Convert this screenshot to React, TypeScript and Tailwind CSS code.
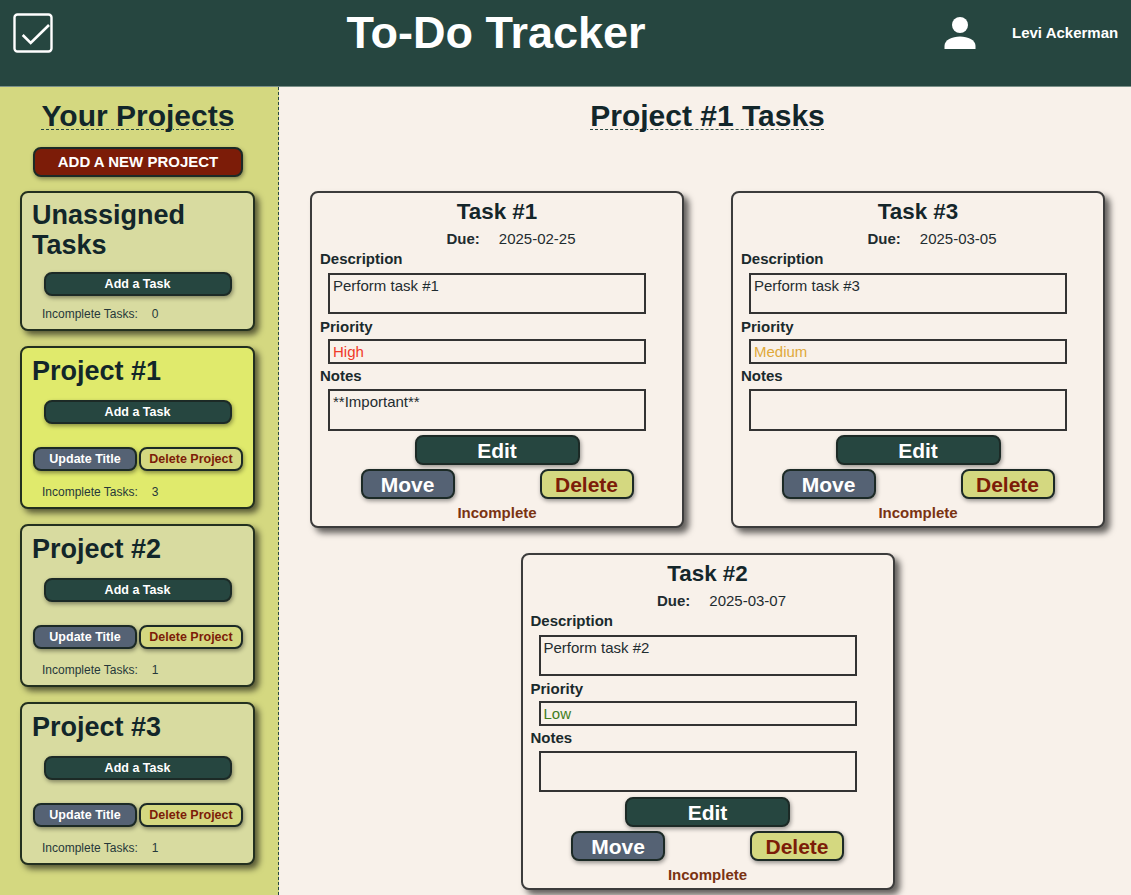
const font = "[font-family:'Liberation_Sans',Arial,sans-serif]";

interface Project {
  title: string;
  incomplete: number;
  active?: boolean;
  canEdit?: boolean;
}

interface Task {
  title: string;
  due: string;
  description: string;
  priority: string;
  priorityClass: string;
  notes: string;
  notesBox: string;
  rowGap: string;
}

const projects: Project[] = [
  { title: "Unassigned Tasks", incomplete: 0 },
  { title: "Project #1", incomplete: 3, active: true, canEdit: true },
  { title: "Project #2", incomplete: 1, canEdit: true },
  { title: "Project #3", incomplete: 1, canEdit: true },
];

const tasks: Task[] = [
  { title: "Task #1", due: "2025-02-25", description: "Perform task #1", priority: "High", priorityClass: "text-[#f03a2a]", notes: "**Important**", notesBox: "h-[42px] mt-[4px] mb-[4px] pt-[2px]", rowGap: "mb-[25px]" },
  { title: "Task #3", due: "2025-03-05", description: "Perform task #3", priority: "Medium", priorityClass: "text-[#e0a93a]", notes: "", notesBox: "h-[42px] mt-[4px] mb-[4px] pt-[2px]", rowGap: "mb-[25px]" },
  { title: "Task #2", due: "2025-03-07", description: "Perform task #2", priority: "Low", priorityClass: "text-[#3f7d1c]", notes: "", notesBox: "h-[41px] mt-[4px] mb-[5px] pt-[2px]", rowGap: "mb-0" },
];

function ProjectCard({ project }: { project: Project }) {
  return (
    <div
      className={`w-[235px] ml-[20px] mb-[15px] rounded-[8px] border-2 border-[#23301f] shadow-[4px_4px_6px_rgba(0,0,0,0.6)] ${
        project.active ? "bg-[#e0ea6c]" : "bg-[#d8dba0]"
      }`}
    >
      <h2 className={`pl-[10px] pr-2 text-[27px] leading-[30px] font-bold text-[#12262a] ${project.canEdit ? "pt-[8px]" : "pt-[7px]"}`}>{project.title}</h2>
      <div className={`flex justify-center ${project.canEdit ? "mt-[14px]" : "mt-[12px]"}`}>
        <button className="w-[188px] h-[24px] rounded-[8px] border-2 border-[#1c2a26] bg-[#264640] text-[12.5px] font-bold text-white shadow-[1px_2px_4px_rgba(0,0,0,0.4)]">
          Add a Task
        </button>
      </div>
      {project.canEdit ? (
        <div className="flex justify-center gap-[2px] mt-[23px] -mx-[2px] pl-[1px]">
          <button className="w-[104px] h-[24px] rounded-[8px] border-2 border-[#1c2a26] bg-[#556274] text-[12.5px] font-bold text-white shadow-[1px_2px_4px_rgba(0,0,0,0.4)]">
            Update Title
          </button>
          <button className="w-[104px] h-[24px] rounded-[8px] border-2 border-[#1c2a26] bg-[#d4d880] text-[12.5px] font-bold text-[#7c1c08] shadow-[1px_2px_4px_rgba(0,0,0,0.4)]">
            Delete Project
          </button>
        </div>
      ) : null}
      <div className={`flex pl-[20px] text-[12px] leading-[16px] text-[#26383a] ${project.canEdit ? "mt-[13px] pb-[7px]" : "mt-[10px] pb-[7px]"}`}>
        <span>Incomplete Tasks:</span>
        <span className="ml-[14px]">{project.incomplete}</span>
      </div>
    </div>
  );
}

function TaskField({ label, value, boxClass, textClass }: { label: string; value: string; boxClass: string; textClass?: string }) {
  return (
    <>
      <div className="pl-[8px] text-[15px] leading-[18px] font-bold text-[#1a2a2c]">{label}</div>
      <div className={`ml-[16px] w-[318px] border-2 border-[#333] pl-[3px] text-[15px] leading-[18px] ${boxClass} ${textClass ?? "text-[#1f2c30]"}`}>
        {value}
      </div>
    </>
  );
}

function TaskCard({ task }: { task: Task }) {
  return (
    <div className={`w-[374px] h-[337px] mx-[23.5px] rounded-[8px] border-2 border-[#3c3c3c] bg-[#f8f1ea] shadow-[5px_5px_6px_rgba(0,0,0,0.6)] ${task.rowGap}`}>
      <h3 className="pt-[6px] text-center text-[22.4px] leading-[26px] font-bold text-[#14262a]">{task.title}</h3>
      <div className="flex justify-center mt-[5px] mb-[2px] text-[15px] leading-[18px] text-[#1f2c30] pl-[28px]">
        <span className="font-bold">Due:</span>
        <span className="ml-[19px]">{task.due}</span>
      </div>
      <TaskField label="Description" value={task.description} boxClass="h-[41px] mt-[5px] mb-[4px] pt-[2px]" />
      <TaskField label="Priority" value={task.priority} textClass={task.priorityClass} boxClass="h-[25px] mt-[3px] mb-[3px] pt-[2px]" />
      <TaskField label="Notes" value={task.notes} boxClass={task.notesBox} />
      <div className="flex justify-center">
        <button className="w-[165px] h-[30px] rounded-[8px] border-2 border-[#1c2a26] bg-[#264640] text-[21px] leading-none font-bold text-white shadow-[1px_2px_4px_rgba(0,0,0,0.4)]">
          Edit
        </button>
      </div>
      <div className="flex justify-center gap-[85px] mt-[4px]">
        <button className="w-[94px] h-[30px] rounded-[8px] border-2 border-[#1c2a26] bg-[#556274] text-[21px] leading-none font-bold text-white shadow-[1px_2px_4px_rgba(0,0,0,0.4)]">
          Move
        </button>
        <button className="w-[94px] h-[30px] rounded-[8px] border-2 border-[#1c2a26] bg-[#d4d880] text-[21px] leading-none font-bold text-[#7c1c08] shadow-[1px_2px_4px_rgba(0,0,0,0.4)]">
          Delete
        </button>
      </div>
      <div className="mt-[5px] text-center text-[15px] leading-[18px] font-bold text-[#7a3312]">Incomplete</div>
    </div>
  );
}

export default function App() {
  return (
    <div className={`h-[895px] overflow-hidden bg-[#f8f1ea] ${font}`}>
      {/* Header */}
      <header className="flex h-[87px] border-b border-[#7a9088] bg-[#264640] text-white">
        <svg viewBox="0 0 40 40" className="ml-[13px] mt-[13px] h-[40px] w-[40px] shrink-0" fill="none" stroke="white">
          <rect x="1.5" y="1.5" width="37" height="37" rx="3" strokeWidth="2.4" />
          <path d="M9.7 22 L17.7 30 L36 12" strokeWidth="2.6" />
        </svg>
        <h1 className="w-[886px] shrink-0 pt-[7px] text-center text-[45px] leading-[52px] font-bold">To-Do Tracker</h1>
        <svg viewBox="0 0 32 32" className="ml-[5px] mt-[17px] h-[32px] w-[32px] shrink-0" fill="white">
          <circle cx="16" cy="8" r="8" />
          <path d="M0.5 29 C0.5 23 8 19.5 16 19.5 C24 19.5 31.5 23 31.5 29 V32 H0.5 Z" />
        </svg>
        <span className="ml-[36px] mt-[24px] text-[15px] leading-[18px] font-bold whitespace-nowrap">Levi Ackerman</span>
      </header>

      <div className="flex h-[808px]">
        {/* Sidebar */}
        <aside className="w-[279px] shrink-0 border-r border-dashed border-[#264640] bg-[#d4d880]">
          <div className="flex justify-center pt-[12px] pr-[2px]">
            <h2 className="underline decoration-dashed decoration-1 decoration-[#264640] underline-offset-[3px] text-[30px] leading-[33px] font-bold text-[#12262a]">Your Projects</h2>
          </div>
          <div className="flex justify-center mt-[15px] mb-[14px] pr-[2px]">
            <button className="w-[210px] h-[30px] rounded-[8px] border-2 border-[#1c2a26] bg-[#7c1c08] text-[15px] font-bold text-white shadow-[1px_2px_4px_rgba(0,0,0,0.4)]">
              ADD A NEW PROJECT
            </button>
          </div>
          {projects.map((p) => (
            <ProjectCard key={p.title} project={p} />
          ))}
        </aside>

        {/* Tasks */}
        <main className="flex-1 pl-[5px]">
          <div className="flex justify-center pt-[12px]">
            <h2 className="underline decoration-dashed decoration-1 decoration-[#264640] underline-offset-[3px] text-[30px] leading-[33px] font-bold text-[#12262a]">Project #1 Tasks</h2>
          </div>
          <div className="flex flex-wrap justify-center mt-[59px]">
            {tasks.map((t) => (
              <TaskCard key={t.title} task={t} />
            ))}
          </div>
        </main>
      </div>
    </div>
  );
}
